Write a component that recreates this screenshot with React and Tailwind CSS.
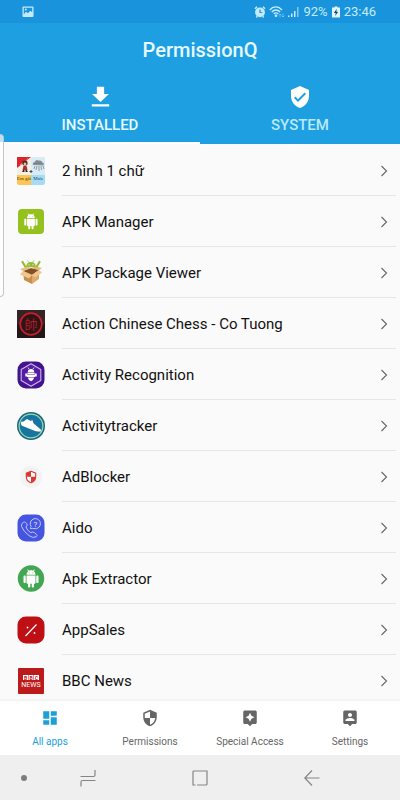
import React, { useState } from 'react';
import { MdAssistant, MdDashboard, MdSecurity, MdVerifiedUser } from 'react-icons/md';

const DownloadIcon = ({ className }) => (
  <svg viewBox="0 0 24 24" fill="currentColor" className={className}>
    <path d="M19 9h-4V3H9v6H5l7 6.800zM4.800 17.500v2h14.400v-2z" />
  </svg>
);

const AccountIcon = ({ className }) => (
  <svg viewBox="0 0 24 24" fill="currentColor" className={className}>
    <path d="M19 2H5a2 2 0 0 0-2 2v14c0 1.100.9 2 2 2h4l3 3 3-3h4c1.100 0 2-.9 2-2V4c0-1.100-.9-2-2-2zm-7 3.300c1.490 0 2.700 1.210 2.700 2.700s-1.210 2.700-2.700 2.700S9.300 9.490 9.300 8s1.210-2.700 2.700-2.700zM18 16H6v-.9c0-2 4-3.100 6-3.100s6 1.100 6 3.100z" />
  </svg>
);

const StatusBar = () => (
  <div className="flex h-[23px] items-center justify-between bg-[#1994dc] pl-[22px] pr-6 text-[#c4ebfb]">
    <svg viewBox="0 0 12 12" className="h-3 w-3">
      <rect x="0.5" y="0.500" width="11" height="10.500" rx="1" fill="currentColor" />
      <path d="M1.800 8.500V1.800h8.400v4.400L8.200 4.800 6 7.200 3.800 5.800z" fill="#1994dc" />
      <circle cx="3.800" cy="3.600" r="1" fill="currentColor" />
    </svg>
    <div className="flex items-center gap-[3px]">
      <svg viewBox="0 0 12 12" className="h-3 w-3" fill="none" stroke="currentColor">
        <circle cx="6" cy="6.300" r="4.900" fill="currentColor" stroke="none" />
        <path d="M1 2.800 3 .8M11 2.800 9 .8M2.300 11.400l1-1M9.700 11.400l-1-1" strokeWidth="1.500" />
        <path d="M6 3.500v3h2.200" stroke="#1994dc" strokeWidth="1.200" />
      </svg>
      <svg viewBox="0 0 16 12" className="h-3 w-4" fill="none" stroke="currentColor">
        <path d="M.8 4C4-.2 9.500-.2 13 4M2.800 6c2.300-2.700 6-2.700 8.300 0M4.800 8c1.200-1.400 3.200-1.400 4.400 0" strokeWidth="1.300" />
        <circle cx="7" cy="9.800" r="1.300" fill="currentColor" stroke="none" />
        <path d="M11 11.500V8m-1.200 1.200L11 8l1.200 1.200M14 7.500V11m-1.200-1.200L14 11l1.200-1.200" strokeWidth="0.700" opacity="0.600" />
      </svg>
      <svg viewBox="0 0 12 12" className="h-3 w-3" fill="currentColor">
        <path d="M0 9.500h1.500V11H0zM3 7.500h1.500V11H3zM6 5h1.500v6H6z" />
        <path d="M9 1h1.500v10H9z" opacity="0.600" />
      </svg>
      <span className="text-[13px] leading-4">92%</span>
      <svg viewBox="0 0 8 12" className="mx-px h-3 w-2">
        <path d="M2.500.5h3v1H8v10H0v-10h2.500z" fill="#e3f6fd" />
        <path d="M4.800 2.800 1.800 7h1.900l-.5 3 3-4.200H4.300z" fill="#0e4b73" />
      </svg>
      <span className="text-[13px] leading-4">23:46</span>
    </div>
  </div>
);

const tabs = [
  { id: 'installed', label: 'INSTALLED', icon: <DownloadIcon className="h-[29px] w-[29px]" /> },
  { id: 'system', label: 'SYSTEM', icon: <MdVerifiedUser className="h-6 w-6" /> },
];

const Robot = ({ transform }) => (
  <g transform={transform} fill="#fff">
    <path d="M6 18c0 .55.45 1 1 1h1v3.500c0 .83.67 1.500 1.500 1.500s1.500-.67 1.500-1.500V19h2v3.500c0 .83.67 1.500 1.500 1.500s1.500-.67 1.500-1.500V19h1c.55 0 1-.45 1-1V8H6zM3.500 8C2.670 8 2 8.670 2 9.500v7c0 .83.67 1.500 1.500 1.500S5 17.330 5 16.500v-7C5 8.670 4.330 8 3.500 8m17 0c-.83 0-1.500.67-1.500 1.500v7c0 .83.67 1.500 1.500 1.500s1.500-.67 1.500-1.500v-7c0-.83-.67-1.500-1.500-1.500M15.530 2.160l1.300-1.300c.2-.2.2-.51 0-.71s-.51-.2-.71 0l-1.480 1.480C13.850 1.230 12.950 1 12 1s-1.860.23-2.660.63L7.850.15c-.2-.2-.51-.2-.71 0s-.2.510 0 .71l1.310 1.310C6.970 3.260 6 5.010 6 7h12c0-1.990-.97-3.750-2.470-4.840M10 5H9V4h1zm5 0h-1V4h1z" />
  </g>
);

const TwoPicturesLogo = () => (
  <g>
    <rect width="14" height="19" fill="#f6efe4" />
    <rect x="14" width="14" height="19" fill="#d9ecf6" />
    <path d="M0 18h14v10H2q-2 0-2-2z" fill="#fbc653" />
    <path d="M14 18h14v8q0 2-2 2H14z" fill="#a4dcf8" />
    <path d="M0 0h14L0 11z" fill="#d9252b" />
    <path d="M3 8 11 1.500" stroke="#f5a4a0" strokeWidth="1" strokeDasharray="1 0.800" />
    <circle cx="8" cy="6" r="2.600" fill="#4b2621" />
    <circle cx="8" cy="7" r="1.400" fill="#efb996" />
    <path d="M6.500 9h3l1 4h-5z" fill="#a82e35" />
    <path d="M6 13h1.500v2H5zM8.500 13H10l.8 2H8.500z" fill="#3a2424" />
    <path d="M16 8q-1-2 1.500-3Q19 2 21.500 3.500 25 3 25.500 5.500q2.500 1 1 3z" fill="#8b949b" />
    <path d="m18 9-1 3m3-3-1 4m3-4v5m2-5 .5 4m1.500-4 1 3M17 6.500h8M19 5h5" stroke="#6f787f" strokeWidth="0.700" />
    <path d="M12.500 14.500h3M14 13v3" stroke="#444" />
    <g fontSize="5" textAnchor="middle" fontFamily="Liberation Serif, serif">
      <text x="7" y="22.500" fill="#4c3510">Em gái</text>
      <text x="21" y="22.500" fill="#1f3d50">Mưa</text>
    </g>
  </g>
);

const PackageLogo = () => (
  <g>
    <path d="M9 8q.5-5 5-5t5 5z" fill="#92be35" />
    <path d="m10.500 1.500 1.500 2M17 1.500l-1.500 2" stroke="#92be35" strokeWidth="0.800" />
    <path d="m5.500 3 3 5M22.500 3l-3 5" stroke="#92be35" strokeWidth="2.200" strokeLinecap="round" />
    <circle cx="12" cy="5.800" r="0.600" fill="#fff" />
    <circle cx="16" cy="5.800" r="0.600" fill="#fff" />
    <path d="m6 12 8-3 8 2-7 5z" fill="#825125" />
    <path d="m6 12 9 4v9l-8-4z" fill="#c98d4c" />
    <path d="m15 16 7-5v9l-7 5z" fill="#dfaa6a" />
    <path d="m6 12 8-3-3-1.500-8 2.500z" fill="#e9bd82" />
    <path d="m14 9 8 2 3-2-7-1.500z" fill="#e4b272" />
    <path d="m6 12 9 4-3 3.500-9-4z" fill="#efc68d" />
    <path d="m15 16 7-5 3 2.500-7 5z" fill="#efc68d" />
  </g>
);

const ChessLogo = () => (
  <g>
    <rect width="28" height="28" fill="#241719" />
    <path d="M0 0h28v14H0z" fill="#342426" />
    <circle cx="14" cy="14" r="10.800" fill="#301316" stroke="#c42029" strokeWidth="1.700" />
    <text x="14" y="18.500" fontSize="13" textAnchor="middle" fill="#a81f27" fontFamily="Noto Sans CJK TC, sans-serif">帥</text>
  </g>
);

const ActivityLogo = () => (
  <g>
    <rect x="0.500" y="0.500" width="27" height="27" rx="8.500" fill="#43138e" />
    <path d="M14 2.800 23.800 8.500v11L14 25.200l-9.800-5.700v-11z" fill="#531ca2" stroke="#cdb9ea" strokeWidth="1.100" strokeLinejoin="round" />
    <path d="M10.800 11q0-3 3.200-3t3.200 3zM10.500 11.500h7v2h-7zM10 14h8v2h-8zM10.800 16.500h6.400q-.8 3.300-3.200 3.700-2.400-.4-3.200-3.700zM8.300 12.500h2v3h-2zM17.700 12.500h2v3h-2z" fill="#fff" />
    <path d="m12 8-1-1.500M16 8l1-1.500" stroke="#fff" strokeWidth="0.800" />
  </g>
);

const ShoeLogo = () => (
  <g>
    <circle cx="14" cy="14" r="14" fill="#17677e" />
    <circle cx="14" cy="14" r="11.900" fill="#1775a1" stroke="#9fdcae" strokeWidth="1.200" />
    <path d="M4.500 9.500q2 .8 4-1.500L10 7l4.300 2.300.7-2 1.500 4 5.500 4.700q2 .8 2.200 3.200-4 .8-8-1L5 13.800Q3 12 4.500 9.500z" fill="#fff" />
  </g>
);

const BlockerLogo = () => (
  <g>
    <circle cx="14" cy="14" r="11" fill="#f3f3f3" />
    <path d="m14 8.300 4.700 1.900v3.600c0 3-2 5-4.700 6-2.700-1-4.700-3-4.700-6v-3.600z" fill="#fff" stroke="#dc372f" strokeWidth="1.100" />
    <path d="M14 8.300v5.500H9.300v-3.600zM14 13.800h4.700c0 3-2 5-4.700 6z" fill="#dc372f" />
  </g>
);

const AidoLogo = () => (
  <g>
    <rect x="0.500" y="0.500" width="27" height="27" rx="8.500" fill="#4555df" />
    <path d="M5 9.500q2.500-3 4.800.2 1 1.600-.8 3.300 1 3.500 4.800 5.700 2-1.500 3.600 0l2.200 1.800q1.300 1.200-.5 2.300-3.200 1.800-7-1.200Q6 17 4.600 12.500q-.4-1.700.4-3z" fill="none" stroke="#bec8ff" strokeWidth="1" />
    <path d="M13.500 14.700q-.2-1.300.6-2.200A5.100 5.100 0 1 1 17 14.600q-1.800-.5-3.500.1z" fill="none" stroke="#bec8ff" strokeWidth="1" />
    <text x="18.500" y="12.800" fontSize="8" textAnchor="middle" fill="#e4e8ff" fontFamily="Roboto, sans-serif">?</text>
  </g>
);

const SalesLogo = () => (
  <g>
    <rect x="0.500" y="0.500" width="27" height="27" rx="8.500" fill="#be1014" />
    <path d="m8.500 20 11-11.500" stroke="#fff" strokeWidth="1.200" />
    <circle cx="10.500" cy="11.500" r="0.900" fill="#fff" />
    <circle cx="17.500" cy="17" r="0.900" fill="#fff" />
  </g>
);

const BbcLogo = () => (
  <g>
    <rect x="1" y="1" width="26" height="26" rx="1" fill="#bd1a1c" />
    <path d="M6 8h5v5H6zM11.500 8h5v5h-5zM17 8h5v5h-5z" fill="#fff" />
    <g fontFamily="Roboto, sans-serif" textAnchor="middle">
      <g fontSize="5" fontWeight="700" fill="#bd1a1c">
        <text x="8.500" y="12.700">B</text>
        <text x="14" y="12.700">B</text>
        <text x="19.500" y="12.700">C</text>
      </g>
      <text x="14" y="20" fontSize="7" fill="#fff">NEWS</text>
    </g>
  </g>
);

const apps = [
  { name: '2 hình 1 chữ', logo: <TwoPicturesLogo /> },
  {
    name: 'APK Manager',
    logo: (
      <g>
        <rect x="1" y="1" width="26" height="25" rx="4" fill="#95c11f" />
        <Robot transform="translate(6 5.500) scale(0.660)" />
      </g>
    ),
  },
  { name: 'APK Package Viewer', logo: <PackageLogo /> },
  { name: 'Action Chinese Chess - Co Tuong', logo: <ChessLogo /> },
  { name: 'Activity Recognition', logo: <ActivityLogo /> },
  { name: 'Activitytracker', logo: <ShoeLogo /> },
  { name: 'AdBlocker', logo: <BlockerLogo /> },
  { name: 'Aido', logo: <AidoLogo /> },
  {
    name: 'Apk Extractor',
    logo: (
      <g>
        <circle cx="14" cy="13.500" r="13.200" fill="#43a652" />
        <Robot transform="translate(5 4.500) scale(0.750)" />
      </g>
    ),
  },
  { name: 'AppSales', logo: <SalesLogo /> },
  { name: 'BBC News', logo: <BbcLogo /> },
];

const navItems = [
  { id: 'all', label: 'All apps', Icon: MdDashboard },
  { id: 'permissions', label: 'Permissions', Icon: MdSecurity },
  { id: 'special', label: 'Special Access', Icon: MdAssistant },
  { id: 'settings', label: 'Settings', Icon: AccountIcon },
];

const SystemNav = () => (
  <div className="grid h-[45px] shrink-0 grid-cols-[48px_80px_1fr_80px_48px] items-center justify-items-center bg-[#efefef] text-[#858585]">
    <span className="h-1.5 w-1.5 rounded-full bg-[#7d7d7d]" />
    <button type="button" aria-label="Recent apps">
      <svg viewBox="0 0 16 18" className="h-[18px] w-4" fill="none" stroke="currentColor" strokeWidth="1.200">
        <path d="M.5 7.500h13q1.500 0 1.500-1.500V1M15.500 11.500h-13Q1 11.500 1 13v4.500" />
      </svg>
    </button>
    <button type="button" aria-label="Home">
      <svg viewBox="0 0 16 16" className="h-4 w-4" fill="none" stroke="currentColor" strokeWidth="1.200">
        <path d="M3.500 15H1V2q0-1 1-1h13v13q0 1-1 1H5" />
      </svg>
    </button>
    <button type="button" aria-label="Back">
      <svg viewBox="0 0 16 16" className="h-4 w-4" fill="none" stroke="currentColor" strokeWidth="1.200">
        <path d="M15.500 8H1M8 .5.800 8 8 15.500" />
      </svg>
    </button>
  </div>
);

const App = () => {
  const [activeTab, setActiveTab] = useState('installed');
  const [activeNav, setActiveNav] = useState('all');

  return (
    <div className="relative flex h-screen flex-col bg-[#fafafa] font-[Roboto,sans-serif]">
      <header className="shrink-0 bg-[#1d9fe2] text-[#e6faff]">
        <StatusBar />
        <h1 className="flex h-[54px] items-center justify-center text-xl font-medium leading-6">PermissionQ</h1>
        <div role="tablist" className="grid grid-cols-2">
          {tabs.map((tab) => (
            <button
              key={tab.id}
              type="button"
              role="tab"
              aria-selected={activeTab === tab.id}
              onClick={() => setActiveTab(tab.id)}
              className={`flex h-[67px] flex-col items-center border-b-2 pt-0.5 text-[15px] font-medium leading-5 ${
                activeTab === tab.id ? 'border-white' : 'border-transparent text-[#b9e9fb]'
              }`}
            >
              <span className="flex h-9 items-center text-white">{tab.icon}</span>
              {tab.label}
            </button>
          ))}
        </div>
      </header>

      <main className="min-h-0 flex-1 overflow-y-auto pt-px [scrollbar-width:none]">
        <ul>
          {apps.map((app) => (
            <li key={app.name}>
              <button type="button" className="flex h-[51px] w-full items-center pl-[17px] pr-1 text-left">
                <svg viewBox="0 0 28 28" className="h-7 w-7 shrink-0" fill="none">
                  {app.logo}
                </svg>
                <span className="ml-[17px] flex h-full flex-1 items-center justify-between border-b border-[#e6e6e6] pr-2 pt-0.5 text-[15px] leading-5 text-[#111]">
                  {app.name}
                  <svg viewBox="0 0 8 12" className="h-3 w-2" fill="none" stroke="#666" strokeWidth="1.100">
                    <path d="m1.500 1 5 5-5 5" />
                  </svg>
                </span>
              </button>
            </li>
          ))}
        </ul>
      </main>

      <nav className="grid h-[54px] shrink-0 grid-cols-4 bg-white shadow-[0_-1px_2px_#eeeeee]">
        {navItems.map(({ id, label, Icon }) => (
          <button
            key={id}
            type="button"
            onClick={() => setActiveNav(id)}
            className={`flex flex-col items-center gap-[7px] pt-2 text-[10px] leading-4 ${
              activeNav === id ? 'text-[#1d9fd8]' : 'text-[#666]'
            }`}
          >
            <Icon className="h-[18px] w-[18px]" />
            {label}
          </button>
        ))}
      </nav>

      <SystemNav />

      {/* edge panel handle */}
      <div className="absolute left-0 top-[134px] h-[163px] w-1 rounded-r border border-l-0 border-[#c2c7ca] bg-white/70" />
    </div>
  );
};

export default App;
